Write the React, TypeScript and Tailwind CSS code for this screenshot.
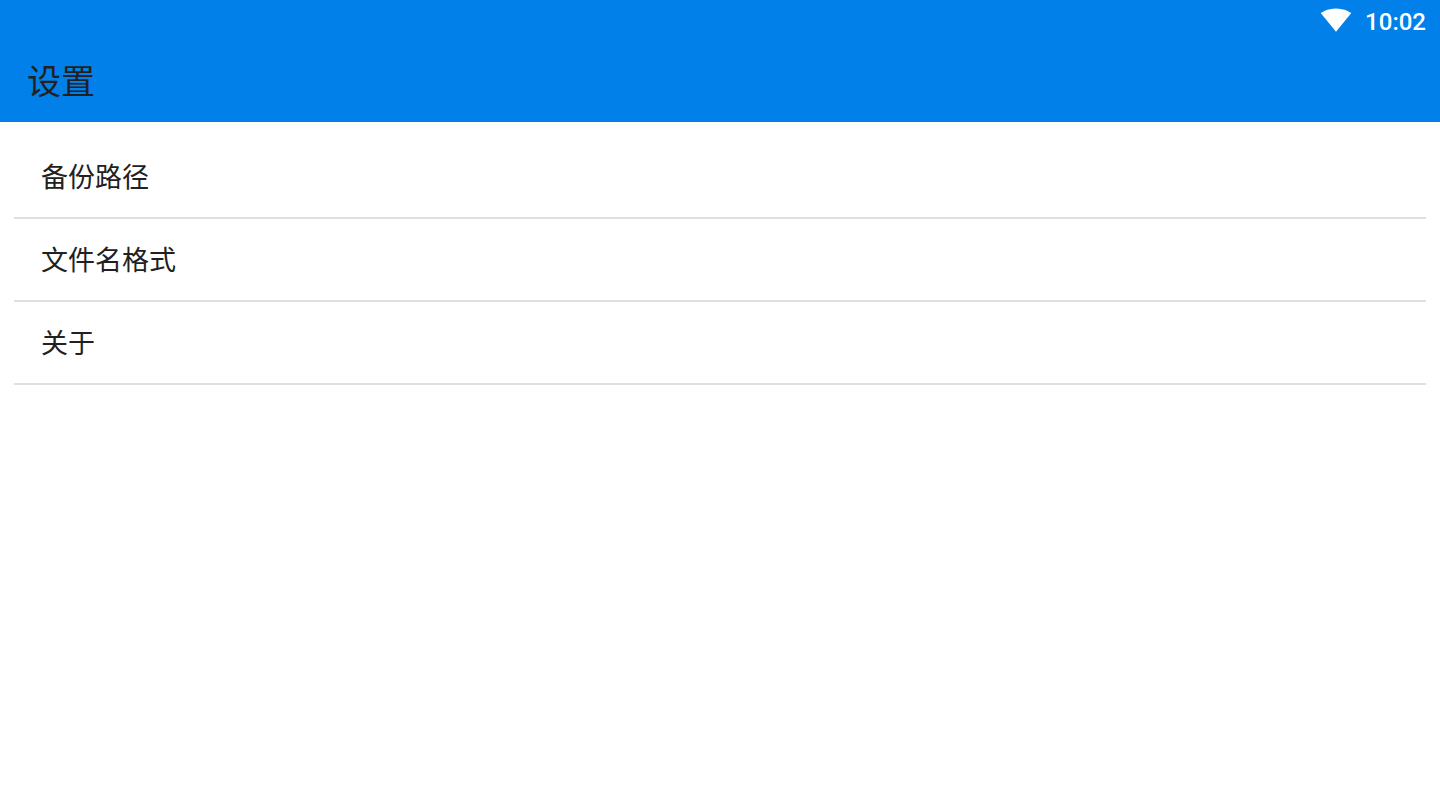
const items = ["备份路径", "文件名格式", "关于"];

function WifiIcon() {
    return (
        <svg className="w-8 h-6" viewBox="0 0 32 24" fill="#fff" aria-hidden="true">
            <path d="M16 23.7L31.3 5C30.6 4.5 24.7 0.4 16 0.4S1.4 4.5 0.7 5L16 23.7z" />
        </svg>
    );
}

function StatusBar() {
    return (
        <div className="flex h-[41px] items-start justify-end gap-[13px] px-3.5 pt-2 text-white">
            <WifiIcon />
            <span className="font-['Roboto',sans-serif] text-[24px] leading-7 font-medium">10:02</span>
        </div>
    );
}

export default function SettingsPage() {
    return (
        <div className="min-h-screen bg-white text-[#212121] font-['Noto_Sans_CJK_SC',sans-serif]">
            <header className="bg-[#0080e8]">
                <StatusBar />
                <div className="flex h-[81px] items-center px-[27px] pb-1">
                    <h1 className="text-[34px] leading-10">设置</h1>
                </div>
            </header>

            <ul className="p-3.5">
                {items.map((item) => (
                    <li key={item} className="border-b-2 border-[#dfdfdf]">
                        <button type="button" className="flex h-[81px] w-full cursor-pointer items-center px-[27px] pb-0.5 text-left text-[27px] leading-10">
                            {item}
                        </button>
                    </li>
                ))}
            </ul>
        </div>
    );
}
